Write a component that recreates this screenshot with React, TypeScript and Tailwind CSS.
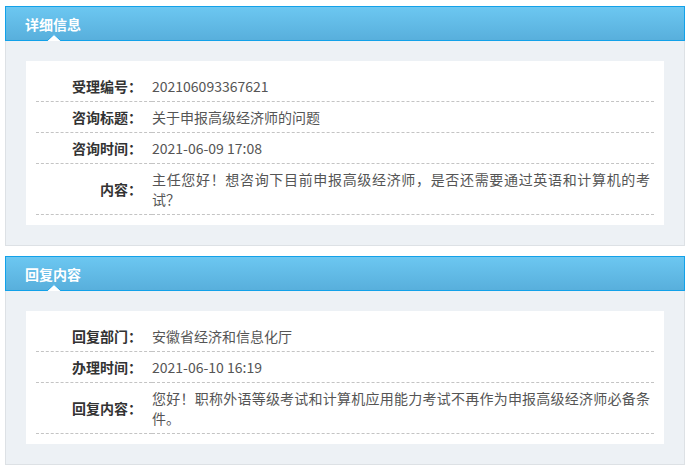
import React from "react";

type Row = { label: string; value: string };

const detailRows: Row[] = [
    { label: "受理编号：", value: "202106093367621" },
    { label: "咨询标题：", value: "关于申报高级经济师的问题" },
    { label: "咨询时间：", value: "2021-06-09 17:08" },
    {
        label: "内容：",
        value: "主任您好！想咨询下目前申报高级经济师，是否还需要通过英语和计算机的考试？",
    },
];

const replyRows: Row[] = [
    { label: "回复部门：", value: "安徽省经济和信息化厅" },
    { label: "办理时间：", value: "2021-06-10 16:19" },
    {
        label: "回复内容：",
        value: "您好！职称外语等级考试和计算机应用能力考试不再作为申报高级经济师必备条件。",
    },
];

function Panel({ title, rows }: { title: string; rows: Row[] }) {
    return (
        <section className="flex flex-col">
            <div className="relative h-[35px] border border-[#12a1e9] bg-gradient-to-b from-[#6cc7f1] to-[#58afdc] flex items-center pl-[19px]">
                <h2 className="text-[14px] font-bold text-white leading-none">{title}</h2>
                {/* little notch under the title */}
                <svg
                    className="absolute left-[41px] bottom-[-1px]"
                    width="14"
                    height="7"
                    viewBox="0 0 14 7"
                >
                    <polygon points="0,7 7,0 14,7" fill="#ffffff" />
                    <polyline points="0,7 7,0.5 14,7" fill="none" stroke="#1ea3e8" strokeWidth="1" />
                </svg>
            </div>
            <div className="bg-[#edf1f5] border border-t-0 border-[#dde1e5] p-[20px]">
                <div className="bg-white p-[10px]">
                    <table className="w-full border-collapse">
                        <tbody>
                            {rows.map((row) => (
                                <tr key={row.label} className="border-b border-dashed border-[#c4c4c4]">
                                    <td className="w-[116px] pr-[10px] pt-[5px] pb-[5px] text-right align-middle font-bold text-[#333] leading-[20px] whitespace-nowrap">
                                        {row.label}
                                    </td>
                                    <td className="pt-[5px] pb-[5px] pr-[4px] text-justify text-[#555] leading-[20px]">
                                        {row.value}
                                    </td>
                                </tr>
                            ))}
                        </tbody>
                    </table>
                </div>
            </div>
        </section>
    );
}

export default function App() {
    return (
        <div
            className="w-[691px] pt-[6px] pl-[5px] pr-[6px] flex flex-col gap-[10px] text-[14px]"
            style={{ fontFamily: '"Noto Sans CJK SC", "Noto Sans", sans-serif' }}
        >
            <Panel title="详细信息" rows={detailRows} />
            <Panel title="回复内容" rows={replyRows} />
        </div>
    );
}
